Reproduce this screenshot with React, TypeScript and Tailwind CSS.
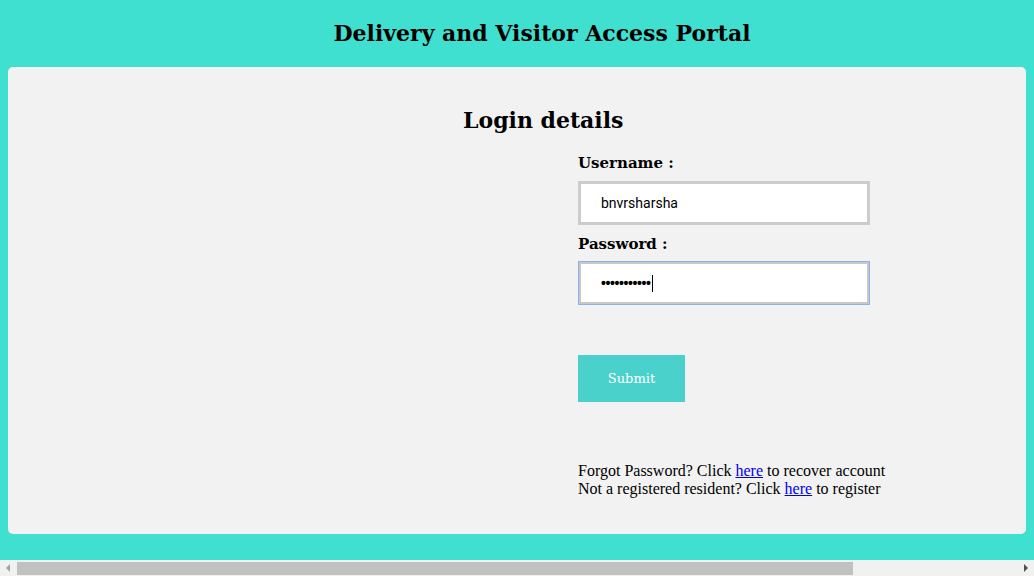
import React from "react";

export default function App() {
  return (
    <div className="w-[1034px] h-[576px] flex flex-col bg-[#40E0D0] overflow-hidden" style={{ fontFamily: '"Liberation Serif", serif' }}>
      <div className="h-[67px] flex items-center justify-center pb-[1px] pl-[50px]">
        <h1 className="font-bold text-black" style={{ fontFamily: '"DejaVu Serif", "Liberation Serif", serif', fontSize: "22px" }}>
          Delivery and Visitor Access Portal
        </h1>
      </div>
      <div className="mx-[8px] h-[467px] bg-[#F2F2F2] rounded-[5px] flex flex-col">
        <div className="pl-[455px] pt-[37px]">
          <h2 className="text-[22px] font-bold leading-[32px] text-black" style={{ fontFamily: '"DejaVu Serif", serif' }}>Login details</h2>
        </div>
        <div className="pl-[570px] flex flex-col">
          <label className="mt-[15px] font-bold leading-[24px] text-black" style={{ fontFamily: '"DejaVu Serif", serif', fontSize: "15px" }}>Username :</label>
          <div className="mt-[6px] w-[292px] h-[44px] bg-white border-[3px] border-[#CCCCCC] flex items-center pl-[20px]">
            <span className="text-[14px] text-black" style={{ fontFamily: 'Roboto, "Liberation Sans", sans-serif' }}>bnvrsharsha</span>
          </div>
          <label className="mt-[7px] font-bold leading-[24px] text-black" style={{ fontFamily: '"DejaVu Serif", serif', fontSize: "15px" }}>Password :</label>
          <div className="mt-[5px] w-[292px] h-[44px] bg-white border-[3px] border-[#C8C8C8] outline outline-1 outline-[#8FB0F0] -outline-offset-1 flex items-center pl-[20px]">
            <span className="text-[14px] text-black tracking-[-0.4px] font-bold leading-none" style={{ fontFamily: '"Liberation Sans", sans-serif' }}>•••••••••••</span>
            <span className="ml-[1px] w-[1px] h-[17px] bg-black"></span>
          </div>
          <button className="mt-[50px] w-[107px] h-[47px] bg-[#4BD1CC] text-white" style={{ fontFamily: '"DejaVu Serif", serif', fontSize: "13px" }}>
            Submit
          </button>
          <div className="mt-[60px] text-[16px] leading-[18px] text-black">
            <div>
              Forgot Password? Click <a className="text-[#0000EE] underline" href="#">here</a> to recover account
            </div>
            <div>
              Not a registered resident? Click <a className="text-[#0000EE] underline" href="#">here</a> to register
            </div>
          </div>
        </div>
      </div>
      <div className="h-[26px]"></div>
      <div className="h-[16px] bg-[#F1F1F1] flex items-center">
        <div className="w-[17px] h-[16px] flex items-center justify-center">
          <svg width="5" height="8" viewBox="0 0 5 8"><path d="M4 0 L0 4 L4 8 Z" fill="#A3A3A3" /></svg>
        </div>
        <div className="w-[836px] h-[13px] bg-[#C1C1C1]"></div>
        <div className="flex-1"></div>
        <div className="w-[17px] h-[16px] flex items-center justify-center">
          <svg width="5" height="8" viewBox="0 0 5 8"><path d="M1 0 L5 4 L1 8 Z" fill="#505050" /></svg>
        </div>
      </div>
    </div>
  );
}
